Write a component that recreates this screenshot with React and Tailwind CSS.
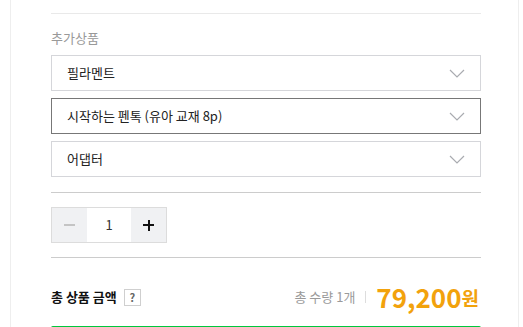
import { useState } from "react";

const extras = [
  { id: 1, label: "필라멘트", focused: false },
  { id: 2, label: "시작하는 펜톡 (유아 교재 8p)", focused: true },
  { id: 3, label: "어댑터", focused: false },
];

function Chevron() {
  return (
    <svg width="16" height="9" viewBox="0 0 16 9" fill="none">
      <polyline points="1,1 8,8 15,1" stroke="#a9abb0" strokeWidth="1.2" />
    </svg>
  );
}

export default function App() {
  const [qty, setQty] = useState(1);
  const price = 79200;

  return (
    <div
      className="min-h-[327px] bg-white"
      style={{ fontFamily: '"Noto Sans CJK KR", "Noto Sans", sans-serif' }}
    >
      <div className="ml-[10px] w-[509px] h-[327px] overflow-hidden border-x border-[#eeeeee] pl-[40px] pr-[37px]">
        <div className="mt-[13px] h-px bg-[#e9e9e9]" />

        {/* 추가상품 */}
        <div className="pt-[14px] text-[13px] leading-[20px] text-[#999999]">추가상품</div>
        <div className="mt-[7px] flex flex-col gap-[7px]">
          {extras.map((e) => (
            <button
              key={e.id}
              className={`flex h-[36px] items-center justify-between border px-[15px] text-left text-[13px] text-[#222222] ${
                e.focused ? "border-[#777777]" : "border-[#d5d6da]"
              }`}
            >
              <span>{e.label}</span>
              <Chevron />
            </button>
          ))}
        </div>

        <div className="mt-[15px] h-px bg-[#cccccc]" />

        {/* stepper */}
        <div className="mt-[14px] flex h-[36px] w-[116px] border border-[#dcdcdc]">
          <button
            onClick={() => setQty(Math.max(1, qty - 1))}
            className="flex w-[35px] items-center justify-center bg-[#f0f1f3]"
          >
            <span className="block h-[2px] w-[11px] bg-[#c4c4c4]" />
          </button>
          <div className="flex w-[44px] items-center justify-center bg-white text-[13px] text-[#333333]">
            {qty}
          </div>
          <button
            onClick={() => setQty(qty + 1)}
            className="relative flex w-[35px] items-center justify-center bg-[#f0f1f3]"
          >
            <span className="absolute h-[2px] w-[11px] bg-[#111111]" />
            <span className="absolute h-[11px] w-[2px] bg-[#111111]" />
          </button>
        </div>

        <div className="mt-[14px] h-px bg-[#cccccc]" />

        {/* total */}
        <div className="mt-[24px] flex h-[30px] items-center justify-between">
          <div className="flex items-center gap-[7px]">
            <span className="text-[13px] font-bold text-[#111111]">총 상품 금액</span>
            <span className="flex h-[17px] w-[17px] items-center justify-center border border-[#cfcfcf] text-[11px] font-bold text-[#666666]">
              ?
            </span>
          </div>
          <div className="flex items-center pr-[2px]">
            <span className="text-[13px] text-[#9a9a9a]">총 수량 {qty}개</span>
            <span className="mx-[10px] h-[12px] w-px bg-[#dddddd]" />
            <span className="text-[26px] font-bold leading-none text-[#f2a20c]">
              {(price * qty).toLocaleString("en-US")}
            </span>
            <span className="text-[19px] font-bold leading-none text-[#f2a20c]">원</span>
          </div>
        </div>

        <div className="mt-[14px] h-[40px] rounded-t-[2px] bg-[#00c73c]" />
      </div>
    </div>
  );
}
